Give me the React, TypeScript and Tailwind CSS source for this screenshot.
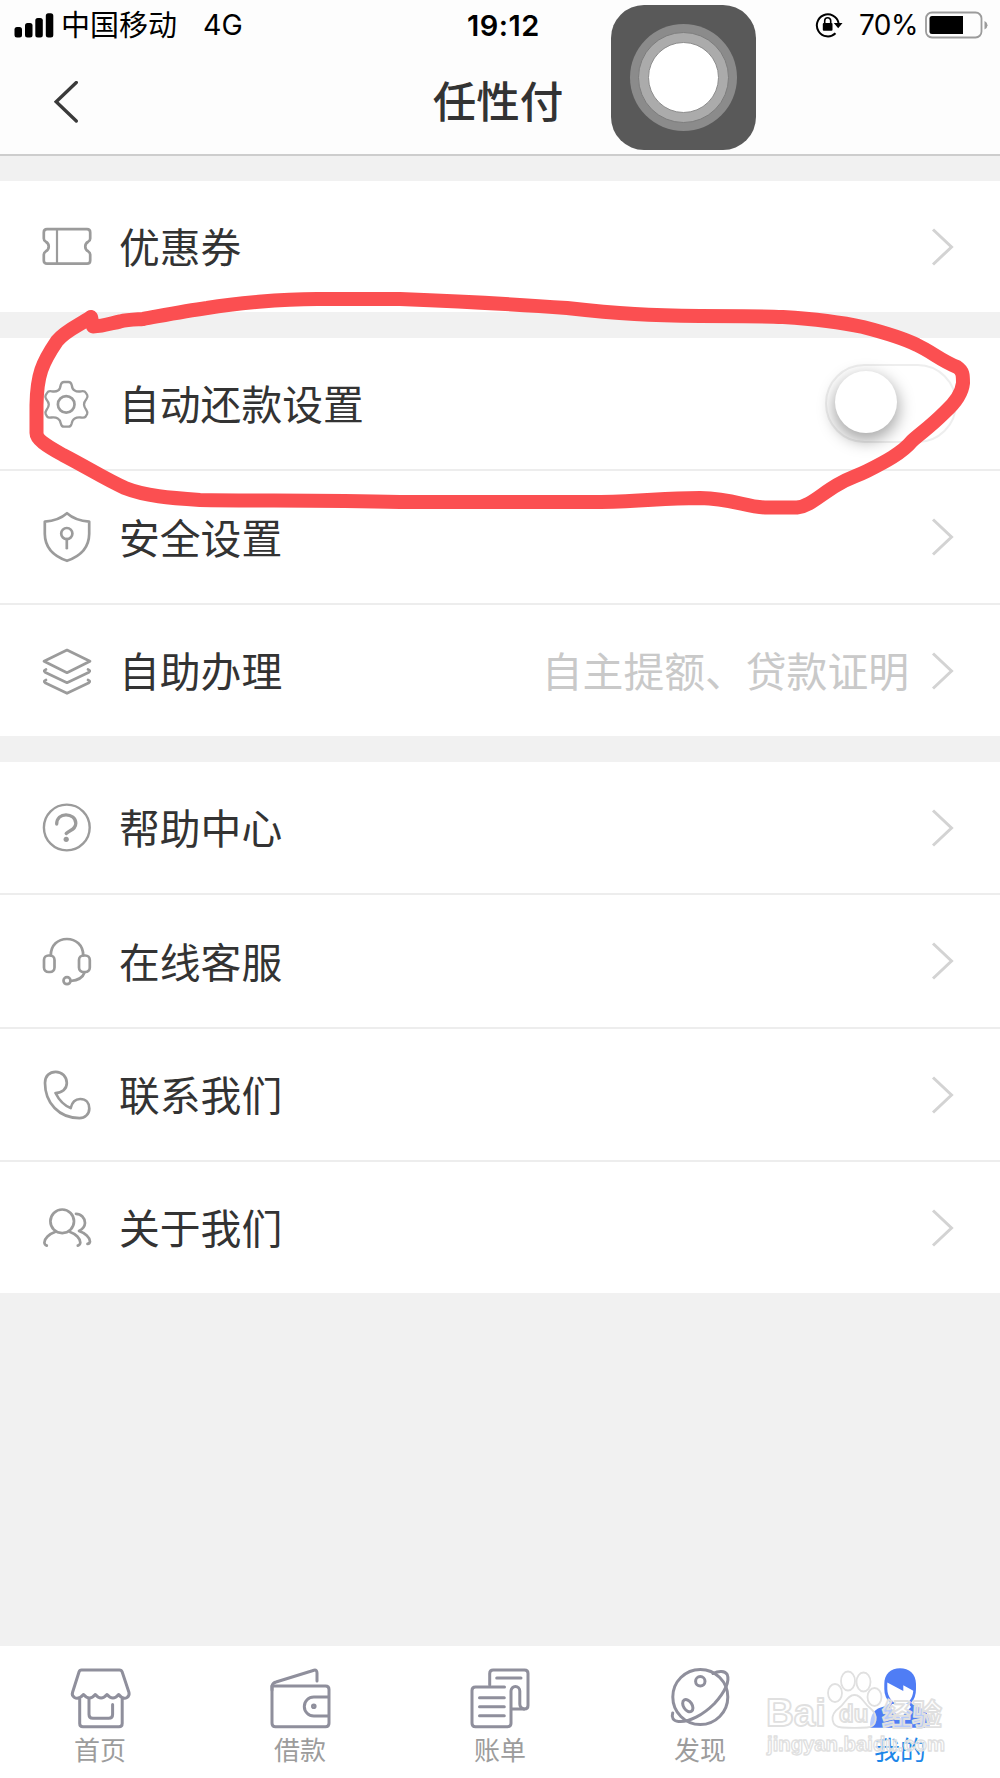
import React from 'react';

type IconProps = { children: React.ReactNode };

const RowIcon: React.FC<IconProps> = ({ children }) => (
  <svg
    viewBox="0 0 50 50"
    className="h-[50px] w-[50px] shrink-0 overflow-visible"
    fill="none"
    stroke="#9b9b9b"
    strokeWidth="2.700"
    strokeLinecap="round"
    strokeLinejoin="round"
  >
    {children}
  </svg>
);

const TabIcon: React.FC<IconProps> = ({ children }) => (
  <svg
    viewBox="0 0 60 62"
    className="h-[62px] w-[60px] overflow-visible"
    fill="none"
    stroke="#8f8f9c"
    strokeWidth="3"
    strokeLinecap="round"
    strokeLinejoin="round"
  >
    {children}
  </svg>
);

const TicketIcon = () => (
  <RowIcon>
    <path d="M5 7.200H45q3.200 0 3.200 3.200V16.500q0 2-2 3.200a5.400 5.400 0 0 0 0 9.600q2 1.200 2 3.200v6q0 3.200-3.200 3.200H5q-3.200 0-3.200-3.200v-6q0-2 2-3.200a5.400 5.400 0 0 0 0-9.600q-2-1.200-2-3.200v-6.100q0-3.200 3.200-3.200z" />
    <path d="M15 7.500v34" strokeWidth="2.200" />
  </RowIcon>
);

const GearIcon = () => (
  <RowIcon>
    <path d="M18.700 6Q19.500 3 22 3h4.500q2.500 0 3.200 3 .6 4.500 3 5.500 2.300 1.500 6.500.8 3.500-.6 4.800 1.700l1.300 2.300q.8 1.700-1 4-2.500 3-2.300 5.300 0 2.400 2.300 5.400 1.500 2 .8 4l-1.400 2.500q-1.200 1.700-4.500 1-4-.6-6.500 1-2.300 1.200-3 4.900-.8 3.300-3.300 3.300H22q-2.500 0-3.200-3.300-.8-3.700-3-4.900-2.600-1.600-6.500-1-3 .6-4.300-1l-1.300-2.500q-.7-2 .8-4 2.300-3 2.300-5.400 0-2.300-2.500-5.300-1.500-2.200-.7-4L5 14q1.200-2.300 4.700-1.700 4.100.7 6.300-.8 2.200-1.200 2.700-5.500z" strokeWidth="2.300" />
    <circle cx="24.200" cy="25.400" r="8.300" />
  </RowIcon>
);

const ShieldIcon = () => (
  <RowIcon>
    <path d="M25 1.200C19 6.500 12 9 2.800 9.600V22C3 36 11 44 25 48.800 39 44 47 36 47.200 22V9.600C38 9 31 6.500 25 1.200z" />
    <circle cx="24.800" cy="21.600" r="5.600" />
    <path d="M24.800 27.200v9" />
  </RowIcon>
);

const LayersIcon = () => (
  <RowIcon>
    <path d="M25 4L48 15.300 25 26.700 2 15.300z" />
    <path d="M4 23.500q-3 1.300-1 2.700L25 36.700 47 26.200q2-1.400-1-2.700" />
    <path d="M4 34q-3 1.300-1 2.700L25 47.300 47 36.700q2-1.400-1-2.700" />
  </RowIcon>
);

const HelpIcon = () => (
  <RowIcon>
    <circle cx="24.800" cy="24.500" r="22.900" strokeWidth="2.400" />
    <path d="M14.700 21C14.700 15 19 11.800 24 11.800S33.800 15 33.800 20.300C33.800 26.500 28.500 26.500 24.200 30.500" strokeWidth="3.300" />
    <circle cx="24.200" cy="36.300" r="2.600" fill="#9b9b9b" stroke="none" />
  </RowIcon>
);

const HeadsetIcon = () => (
  <RowIcon>
    <path d="M8.800 19.500C8.800 9 16 3 24.900 3S41.200 9 41.200 19.500" />
    <rect x="2" y="19.500" width="10.500" height="16.500" rx="4.500" />
    <rect x="37" y="19.500" width="10.800" height="16.500" rx="4.500" />
    <path d="M42.500 36.500Q40 44 28.700 45" />
    <circle cx="25" cy="44.700" r="3.500" />
  </RowIcon>
);

const PhoneIcon = () => (
  <RowIcon>
    <path d="M3 13C3 6 7.500 1.800 13.700 1.800S24.800 6.500 24.800 13C24.800 19 20 23 13.500 23 17.500 31 22 35.500 28.700 38 30 32.500 33.500 29 38.200 29 44 29 47.300 33 47.300 38.500S43 48.200 37.500 48.200C17 48 3 33 3 13z" />
  </RowIcon>
);

const UsersIcon = () => (
  <RowIcon>
    <circle cx="20.200" cy="18.300" r="11.800" />
    <path d="M13 29C7 31 2.500 35.500 2.400 39.500Q2.500 42 4.800 42.600" />
    <path d="M28 29C34 31 38.200 35.500 38.300 39.500Q38.200 42 35.800 42.600" />
    <path d="M34 10.800C39 10.800 43 15 43 20Q42.800 25 37 28C43 30 48 34.500 48 38.500Q47.800 40.500 45.500 40.900" />
  </RowIcon>
);

const ShopIcon = () => (
  <TabIcon>
    <path d="M11.500 3H49.500q2 0 2.700 2L59 25.500Q59.700 28.500 57 30.500 53 33 48.700 27.500 43 34.500 37 27.500 31 34.500 25.300 27.500 19.500 34.500 13.500 27.500 8.500 33 4.500 30.500 1.500 28.500 2.500 25.500L9 5q.6-2 2.500-2z" />
    <path d="M9.700 32V56.500q0 3.200 3.200 3.200H49q3.200 0 3.200-3.200V32" />
    <path d="M19 32V47.500q0 3.800 3.800 3.800h16q3.800 0 3.800-3.800V37.500" />
  </TabIcon>
);

const WalletIcon = () => (
  <TabIcon>
    <path d="M2 23V19Q2.500 16 6 15L44 3.200Q47 2.500 47 6v8" />
    <path d="M2 19H55.500q3.500 0 3.500 3.500v33.700q0 3.500-3.500 3.500h-50q-3.500 0-3.500-3.500z" />
    <path d="M58 30H43.800a9.500 9.500 0 0 0 0 19H58" />
    <circle cx="43.800" cy="39.300" r="1.300" />
  </TabIcon>
);

const BillIcon = () => (
  <TabIcon>
    <path d="M19.700 18V6.500Q19.700 3 23.200 3H54.500Q58 3 58 6.500V38.500Q58 42 54.500 42H42" />
    <path d="M26.700 11H51M9.500 30.700H34.300M9.500 39.700H34.300M9.500 48.700H34.300" />
    <path d="M34.500 20H5.500Q2 20 2 23.500V56.200Q2 59.700 5.500 59.700H37.500Q41 59.700 41 56.200V24a4.400 4.400 0 0 1 8.800 0V37Q49.800 41 54 42" />
  </TabIcon>
);

const PlanetIcon = () => (
  <TabIcon>
    <circle cx="30.300" cy="30" r="27.500" />
    <circle cx="30.300" cy="14.300" r="4.700" />
    <ellipse cx="17.800" cy="38.700" rx="4.300" ry="6.700" transform="rotate(-33 17.800 38.700)" />
    <path d="M43 6.500C49 3.500 55 3.800 57.200 7.500 60 14 55 25 44.500 36.500 33 48 19 55.500 8.500 54.500 3 54 1.300 50.500 2.700 46" />
  </TabIcon>
);

const MeIcon = () => (
  <TabIcon>
    <path d="M0 60.700C0 46 5 41.500 14 39.500L20 36Q14.300 30 14.300 22V17C14.300 7 21 1.300 30 1.300S46 7 46 17V22Q46 31 41 36L47 39.500C55.500 42 60 47 60 60.700z" fill="#4f7df5" stroke="none" />
    <path d="M17.300 15.500L33.300 24V18.300L43.300 23.700C42.500 32 38.500 37.500 30.500 38 22.500 37.500 17.300 29 17.300 22z" fill="#fff" stroke="none" />
    <path d="M22 37h17l2 3-10.500 11L20 40z" fill="#fff" stroke="none" />
  </TabIcon>
);

const Chevron = () => (
  <svg viewBox="0 0 24 38" className="mr-[46px] h-[38px] w-6 shrink-0" fill="none" stroke="#d3d3d3" strokeWidth="3">
    <path d="M3 1.500L21.500 19 3 36.500" />
  </svg>
);

const Toggle = () => (
  <div className="mr-[43px] flex h-[79px] w-[132px] items-center rounded-full border-2 border-[#eeeeee] pb-[3px] pl-2">
    <div className="h-[62px] w-[62px] rounded-full bg-white shadow-[0_6px_16px_2px_rgba(0,0,0,0.34)]" />
  </div>
);

type Row = { label: string; icon: React.FC; hint?: string; toggle?: boolean };

const groups: Row[][] = [
  [{ label: '优惠券', icon: TicketIcon }],
  [
    { label: '自动还款设置', icon: GearIcon, toggle: true },
    { label: '安全设置', icon: ShieldIcon },
    { label: '自助办理', icon: LayersIcon, hint: '自主提额、贷款证明' },
  ],
  [
    { label: '帮助中心', icon: HelpIcon },
    { label: '在线客服', icon: HeadsetIcon },
    { label: '联系我们', icon: PhoneIcon },
    { label: '关于我们', icon: UsersIcon },
  ],
];

const tabs = [
  { label: '首页', icon: ShopIcon },
  { label: '借款', icon: WalletIcon },
  { label: '账单', icon: BillIcon },
  { label: '发现', icon: PlanetIcon },
  { label: '我的', icon: MeIcon, active: true },
];

const StatusBar = () => (
  <div className="grid h-[50px] grid-cols-3 items-center text-black">
    <div className="flex items-center pl-[14px]">
      <svg viewBox="0 0 40 25" className="h-[25px] w-10">
        <rect x="0.500" y="14" width="7.500" height="10.500" rx="2.500" />
        <rect x="11" y="10" width="7.500" height="14.500" rx="2.500" />
        <rect x="21.300" y="5" width="7.500" height="19.500" rx="2.500" />
        <rect x="31.800" y="0.300" width="7.500" height="24.200" rx="2.500" />
      </svg>
      <span className="ml-[7px] pb-[3px] text-[29px] leading-none">中国移动</span>
      <span className="ml-[26px] font-['Inter'] text-[28.500px] leading-none">4G</span>
    </div>
    <div className="pl-[7px] text-center font-['Inter'] text-[29px] leading-none font-semibold tracking-[0.5px]">19:12</div>
    <div className="flex items-center justify-end pr-3">
      <svg viewBox="0 0 28 26" className="h-[26px] w-7" fill="none" stroke="#000" strokeWidth="2">
        <path d="M20.500 21.300A11 11 0 1 1 23.600 11" />
        <path d="M18.800 11h8.700l-4.300 5.200z" fill="#000" stroke="none" />
        <rect x="7.800" y="11" width="9.700" height="7.800" rx="1" fill="#000" stroke="none" />
        <path d="M9.700 11V8.800a3 3 0 0 1 6 0V11" strokeWidth="1.600" />
      </svg>
      <span className="ml-4 font-['Inter'] text-[28px] leading-none tracking-[-0.5px]">70%</span>
      <svg viewBox="0 0 63 28" className="ml-[7px] h-7 w-[63px]">
        <rect x="1" y="1.500" width="55.500" height="25" rx="6" fill="none" stroke="#9b9b9b" strokeWidth="1.800" />
        <path d="M7 5H38V23H7q-2.500 0-2.500-2.500v-13Q4.500 5 7 5z" />
        <path d="M59.500 10q3 1.500 3 4.200t-3 4.300z" fill="#9b9b9b" />
      </svg>
    </div>
  </div>
);

const NavBar = () => (
  <div className="grid h-[104px] grid-cols-3 items-center">
    <svg viewBox="0 0 24 42" className="ml-[54px] h-[42px] w-6" fill="none" stroke="#3a3a3a" strokeWidth="3.300" strokeLinecap="round">
      <path d="M22.300 1.500L2.200 20.700 22.300 40" />
    </svg>
    <h1 className="pr-1 pb-[5px] text-center text-[43.500px] leading-none font-medium text-[#333]">任性付</h1>
  </div>
);

const AssistiveTouch = () => (
  <div className="absolute top-[5px] left-[611px] flex h-[145px] w-[145px] items-center justify-center rounded-[33px] bg-[#595959]">
    <div className="flex h-[107px] w-[107px] items-center justify-center rounded-full bg-[#8b8b8b]">
      <div className="flex h-[91px] w-[91px] items-center justify-center rounded-full border border-[#7d7d7d] bg-[#ababab]">
        <div className="h-[71px] w-[71px] rounded-full border border-[#8d8d8d] bg-white" />
      </div>
    </div>
  </div>
);

// hand-drawn highlight around the auto repayment row
const Marker = () => (
  <svg
    viewBox="0 0 1000 1778"
    className="pointer-events-none absolute inset-0 h-[1778px] w-[1000px]"
    fill="none"
    stroke="#fb4f51"
    strokeWidth="14"
    strokeLinecap="round"
    strokeLinejoin="round"
  >
    <path d="M91 317L93 326.500C104 326 112 323 120 321.500 128 319.500 136 319.500 143 319 165 315 185 311 207 308 235 303.500 280 299 317 299H400C450 301 500 303 567 308 620 314 650 315.500 700 316 730 316 760 316 783 317 815 319 840 322 863 327 890 334 905 339 917 345 932 352 940 360 957 367 963 371 963 375 963 383 962 393 955 403 945 412 930 427 922 432 912 441 902 453 885 462 867 471 855 477 850 477 837 485 820 495 810 506 797 507.500H765C745 507 735 499 700 498 660 498 650 501 601 502H400C320 500 260 501 200 500 170 498 145 496 125 488 105 479 90 469 63 455 45 445 36.500 439 36.500 433V405C37 375 42 363 57 341 66 330 80 325 91 317z" />
  </svg>
);

const Watermark = () => (
  <svg
    viewBox="0 0 200 100"
    className="pointer-events-none absolute top-[1665px] left-[760px] h-[100px] w-[200px] font-['Liberation_Sans','Noto_Sans_CJK_SC',sans-serif] font-bold"
    fill="#fff"
    fillOpacity="0.600"
    stroke="#e0e0e0"
    strokeWidth="1.800"
    strokeLinejoin="round"
  >
    <text x="6" y="61" fontSize="38.500">Bai</text>
    <ellipse cx="75" cy="28" rx="7" ry="9" />
    <ellipse cx="88" cy="16" rx="7" ry="9.500" />
    <ellipse cx="103.500" cy="17" rx="7" ry="9.500" />
    <ellipse cx="114.500" cy="32" rx="7" ry="9" />
    <path d="M94.500 30C102 30 103 38 110 43 119 50 117 62 107 62.500 100 63 89 63 82 62.500 71 62 69 50 79 43 86 38 87 30 94.500 30z" />
    <text x="79" y="57" fontSize="24">du</text>
    <text x="122" y="60" fontSize="30">经验</text>
    <text x="7" y="86" fontSize="20" textLength="178" lengthAdjust="spacingAndGlyphs" strokeWidth="1.300">jingyan.baidu.com</text>
  </svg>
);

export default function App() {
  return (
    <div className="relative flex h-[1778px] w-[1000px] flex-col overflow-hidden bg-[#f1f1f1] font-['Noto_Sans_CJK_SC',sans-serif]">
      <header className="h-[156px] shrink-0 border-b-2 border-[#cdcdcd] bg-[#fdfdfd]">
        <StatusBar />
        <NavBar />
      </header>

      <main className="flex flex-1 flex-col gap-[26px] pt-[25px]">
        {groups.map((rows) => (
          <section key={rows[0].label} className="bg-white">
            {rows.map(({ label, icon: Icon, hint, toggle }) => (
              <div key={label} className="flex h-[133px] items-center border-b-2 border-[#ededed] pl-[42px] nth-2:h-[134px] last:h-[131px] last:border-b-0">
                <Icon />
                <span className="ml-[27px] flex-1 text-[40.800px] leading-none text-[#333]">{label}</span>
                {hint && <span className="mr-[21px] text-[40.800px] leading-none text-[#c9c9c9]">{hint}</span>}
                {toggle ? <Toggle /> : <Chevron />}
              </div>
            ))}
          </section>
        ))}
      </main>

      <nav className="grid h-[132px] shrink-0 grid-cols-5 bg-white">
        {tabs.map(({ label, icon: Icon, active }) => (
          <div key={label} className="flex flex-col items-center pt-[21px]">
            <Icon />
            <span className={`mt-[7px] text-[26px] leading-none ${active ? 'text-[#1c86e8]' : 'text-[#9c9c9c]'}`}>{label}</span>
          </div>
        ))}
      </nav>

      <Marker />
      <AssistiveTouch />
      <Watermark />
    </div>
  );
}
